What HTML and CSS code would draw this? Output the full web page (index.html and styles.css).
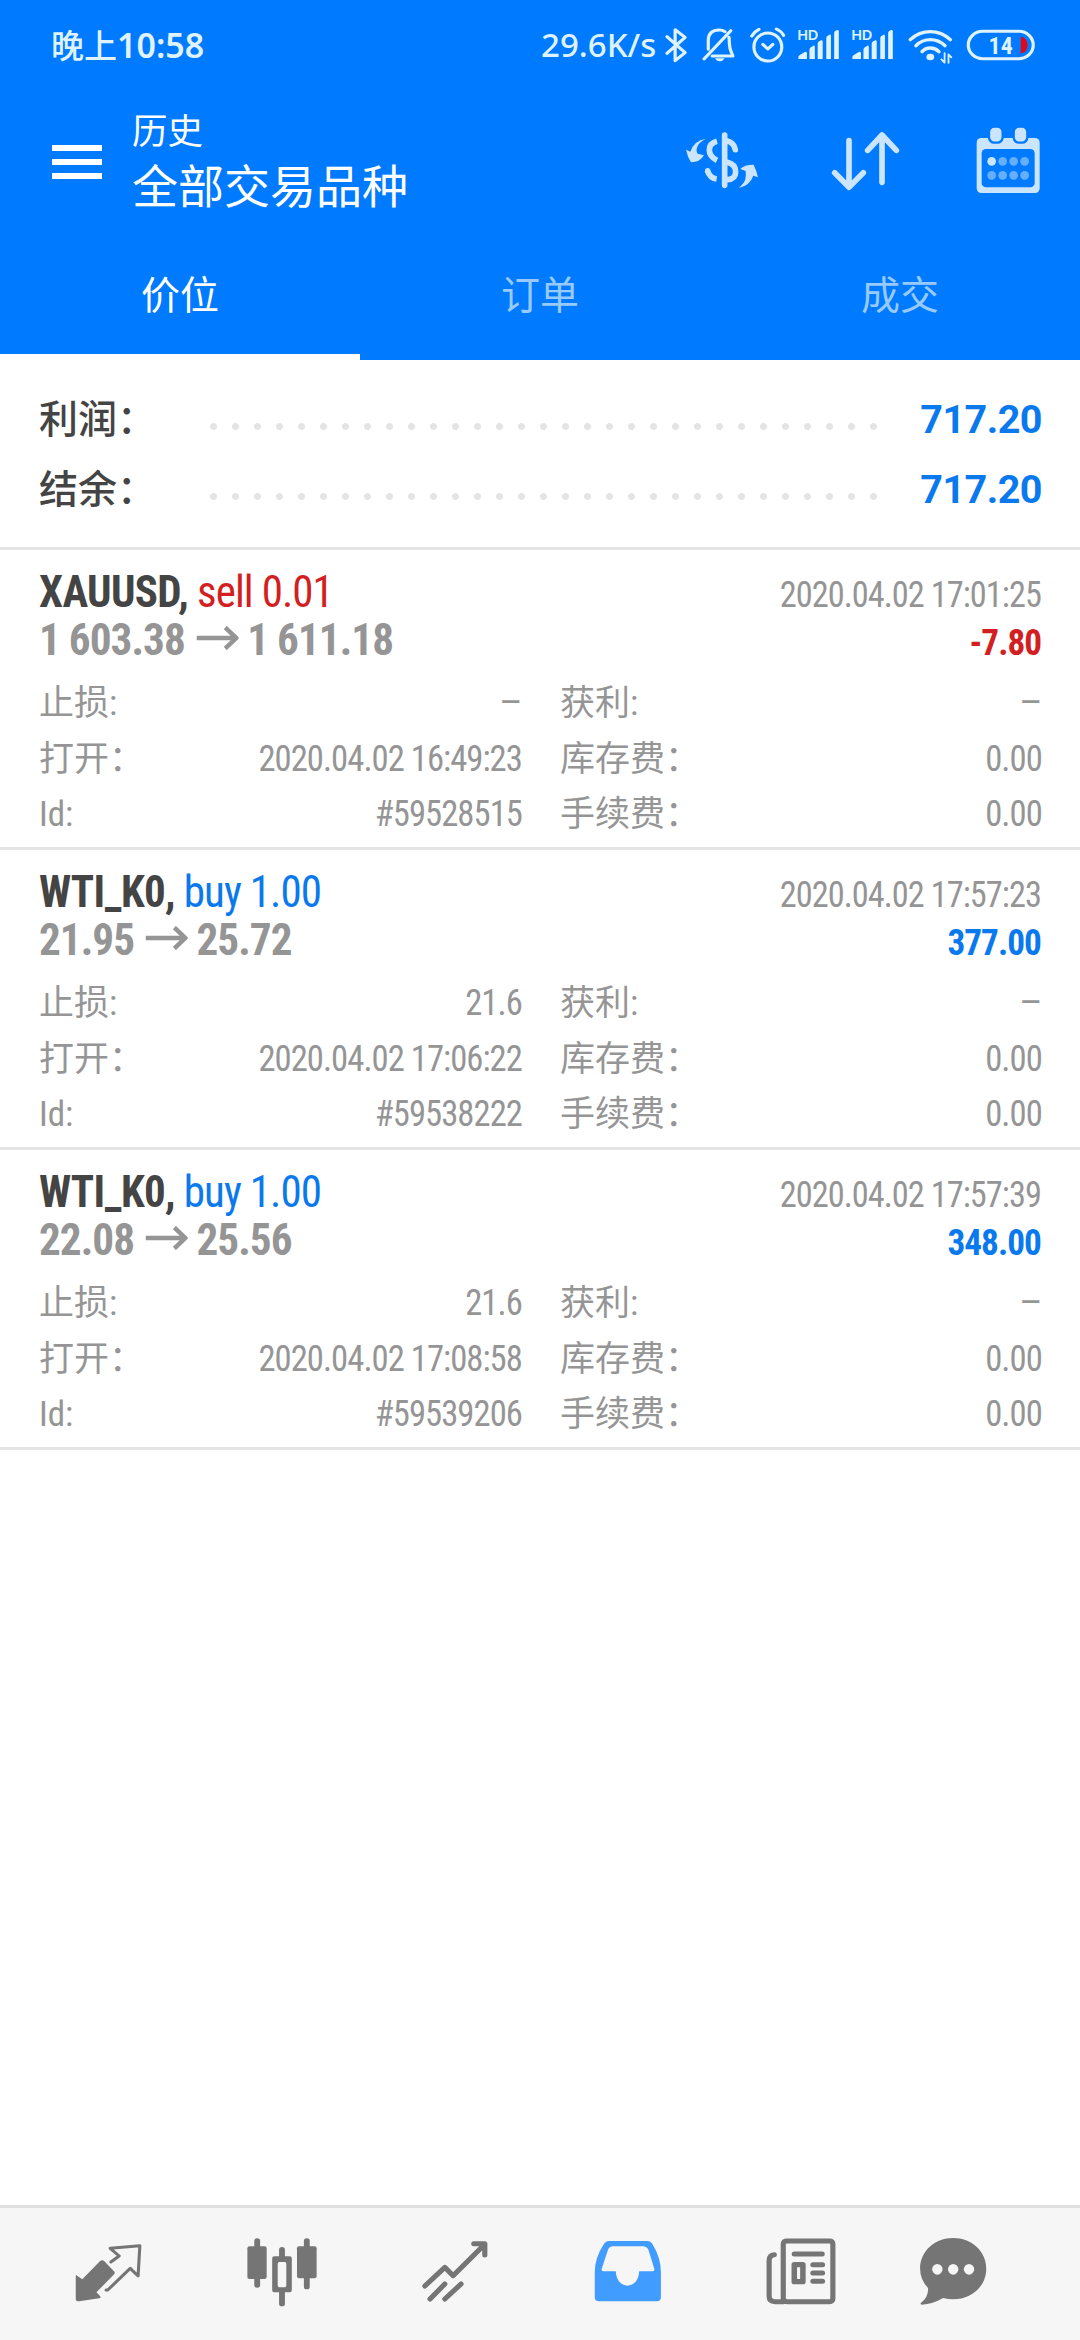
FILE: index.html
```html
<!DOCTYPE html>
<html lang="zh-CN">
<head>
<meta charset="utf-8">
<title>历史</title>
<link rel="stylesheet" href="styles.css">
</head>
<body>
<header class="header">
  <div class="status">
    <span class="clock">晚上<b>10:58</b></span>
    <div class="status-right">
      <span class="speed">29.6K/s</span>
      <svg class="s-bt" viewBox="400 75 100 120" preserveAspectRatio="none"><path d="M411 110L462 158L434 182V89L462 112L411 160" class="st"/></svg>
      <svg class="s-bell" viewBox="500 75 130 120" preserveAspectRatio="none"><path d="M514 177L589 92M526 148V122C526 98 540 90 557 90Q566 90 573 95M584 112Q585 118 585 130C585 148 590 156 595 168H537" class="st"/><path d="M545 175H572Q567 184 558 184T545 175Z" fill="#dff2ff"/></svg>
      <svg class="s-alarm" viewBox="630 75 135 120" preserveAspectRatio="none"><ellipse cx="694" cy="141" rx="39" ry="42" class="st"/><path d="M680 133L694 147L708 133M649 108Q656 95 669 88M738 106Q731 93 718 87" class="st"/></svg>
      <svg class="s-sig" viewBox="765 75 150 120" preserveAspectRatio="none"><text x="776" y="119" class="hd">HD</text><path d="M780 177V171Q780 168 784 165L798 156Q804 153 804 160V177ZM811 177V149Q811 145 815 142L822 137Q826 136 826 141V177ZM834 177V131Q834 127 838 124L844 121Q848 120 848 125V177ZM858 177V114Q858 110 862 107L867 104Q871 103 871 108V177ZM880 177V99Q880 95 884 92L889 90Q893 90 893 94V177Z" fill="#dff2ff"/></svg>
      <svg class="s-sig" viewBox="765 75 150 120" preserveAspectRatio="none"><text x="776" y="119" class="hd">HD</text><path d="M780 177V171Q780 168 784 165L798 156Q804 153 804 160V177ZM811 177V149Q811 145 815 142L822 137Q826 136 826 141V177ZM834 177V131Q834 127 838 124L844 121Q848 120 848 125V177ZM858 177V114Q858 110 862 107L867 104Q871 103 871 108V177ZM880 177V99Q880 95 884 92L889 90Q893 90 893 94V177Z" fill="#dff2ff"/></svg>
      <svg class="s-wifi" viewBox="1066 75 164 120" preserveAspectRatio="none"><path d="M1092 119Q1116 95 1148 95T1204 119M1108 137Q1125 119 1148 119T1189 137M1125 155Q1134 144 1148 144T1172 155" class="st wave"/><ellipse cx="1148" cy="171" rx="11" ry="10" fill="#dff2ff"/><path d="M1188 159V188L1179 178M1199 189V163L1207 172" class="st thin"/></svg>
      <svg class="s-batt" viewBox="1230 75 230 120" preserveAspectRatio="none"><rect x="1256" y="94" width="182" height="82" rx="40" ry="41" class="st"/><path d="M1403 110Q1422 114 1422 135T1403 161Z" fill="#e00818"/><text x="1313" y="162" textLength="68" lengthAdjust="spacingAndGlyphs" class="pct">14</text></svg>
    </div>
  </div>
  <div class="bar">
    <div class="burger"><i></i><i></i><i></i></div>
    <div class="titles"><div class="sub">历史</div><h1>全部交易品种</h1></div>
    <div class="actions">
      <svg class="a-money" viewBox="60 75 250 210"><g fill="none" stroke="#cce5ff" stroke-width="17"><path d="M194 105V256M202 123Q222 128 226 149M202 187Q227 193 227 215T202 239" stroke-linecap="round"/><path d="M171 124Q148 130 148 150T171 181M142 211Q149 234 170 237"/></g><circle cx="143" cy="212" r="8" fill="#cce5ff"/><path d="M137 117Q117 127 112 140T113 161L132 166Q120 187 93 187Q83 172 78 149L91 155Q103 121 137 117ZM236 264Q253 250 256 238T257 213L241 207Q252 194 281 194Q290 212 294 232L280 227Q270 257 236 264Z" fill="#cce5ff"/></svg>
      <svg class="a-sort" viewBox="500 75 230 210"><path d="M566 122V261M523 218L566 262L609 218M665 247V105M622 151L665 105L708 151" fill="none" stroke="#cce5ff" stroke-width="17" stroke-linecap="round" stroke-linejoin="round"/></svg>
      <svg class="a-cal" viewBox="940 75 210 210"><rect x="951" y="114" width="189" height="165" rx="14" fill="#cce5ff"/><rect x="966" y="147" width="159" height="115" rx="13" fill="#007aff"/><g fill="#cce5ff" stroke="#007aff" stroke-width="7"><rect x="988" y="80" width="41" height="48" rx="16"/><rect x="1062" y="80" width="41" height="48" rx="16"/></g><g fill="#66afff"><circle cx="996" cy="184" r="13" fill="#cce5ff"/><circle cx="1029" cy="184" r="13"/><circle cx="1062" cy="184" r="13"/><circle cx="1095" cy="184" r="13"/><circle cx="996" cy="226" r="13"/><circle cx="1029" cy="226" r="13"/><circle cx="1062" cy="226" r="13"/><circle cx="1095" cy="226" r="13"/></g></svg>
    </div>
  </div>
  <nav class="tabs"><div class="tab active">价位</div><div class="tab">订单</div><div class="tab">成交</div></nav>
</header>

<section class="summary">
  <div class="sum-row"><span class="sum-label">利润：</span><span class="dots"></span><span class="sum-value">717.20</span></div>
  <div class="sum-row"><span class="sum-label">结余：</span><span class="dots"></span><span class="sum-value">717.20</span></div>
</section>

<main>
  <article class="deal">
    <div class="line"><div class="name"><b>XAUUSD,</b> <span class="sell">sell 0.01</span></div><div class="time">2020.04.02 17:01:25</div></div>
    <div class="line"><div class="price">1 603.38<svg class="arrow" viewBox="0 0 44 24"><path d="M0 12H42M30 1.5L41.5 12L30 22.5"/></svg>1 611.18</div><div class="pnl sell">-7.80</div></div>
    <div class="details">
      <div><span>止损:</span><span class="dash">–</span></div><div><span>获利:</span><span class="dash">–</span></div>
      <div><span>打开：</span><span>2020.04.02 16:49:23</span></div><div><span>库存费：</span><span>0.00</span></div>
      <div><span>Id:</span><span>#59528515</span></div><div><span>手续费：</span><span>0.00</span></div>
    </div>
  </article>
  <article class="deal">
    <div class="line"><div class="name"><b>WTI_K0,</b> <span class="buy">buy 1.00</span></div><div class="time">2020.04.02 17:57:23</div></div>
    <div class="line"><div class="price">21.95<svg class="arrow" viewBox="0 0 44 24"><path d="M0 12H42M30 1.5L41.5 12L30 22.5"/></svg>25.72</div><div class="pnl buy">377.00</div></div>
    <div class="details">
      <div><span>止损:</span><span>21.6</span></div><div><span>获利:</span><span class="dash">–</span></div>
      <div><span>打开：</span><span>2020.04.02 17:06:22</span></div><div><span>库存费：</span><span>0.00</span></div>
      <div><span>Id:</span><span>#59538222</span></div><div><span>手续费：</span><span>0.00</span></div>
    </div>
  </article>
  <article class="deal">
    <div class="line"><div class="name"><b>WTI_K0,</b> <span class="buy">buy 1.00</span></div><div class="time">2020.04.02 17:57:39</div></div>
    <div class="line"><div class="price">22.08<svg class="arrow" viewBox="0 0 44 24"><path d="M0 12H42M30 1.5L41.5 12L30 22.5"/></svg>25.56</div><div class="pnl buy">348.00</div></div>
    <div class="details">
      <div><span>止损:</span><span>21.6</span></div><div><span>获利:</span><span class="dash">–</span></div>
      <div><span>打开：</span><span>2020.04.02 17:08:58</span></div><div><span>库存费：</span><span>0.00</span></div>
      <div><span>Id:</span><span>#59539206</span></div><div><span>手续费：</span><span>0.00</span></div>
    </div>
  </article>
</main>

<footer class="nav">
  <svg viewBox="212 140 209 210" preserveAspectRatio="none"><path d="M220 257Q220 252 224 256L239 267L290 213Q297 207 303 213L331 243Q336 248 330 253L280 306L291 318Q294 323 288 324L230 333Q220 334 220 325Z" fill="#757575"/><path d="M322 215L346 197L320 174L406 166L401 257L378 234L313 299H308" class="g" stroke-width="9"/></svg>
  <svg viewBox="712 140 209 210" preserveAspectRatio="none"><g fill="#757575"><rect x="716" y="168" width="56" height="98" rx="6"/><rect x="860" y="168" width="57" height="96" rx="6"/><path fill-rule="evenodd" d="M794 198H839Q845 198 845 204V300Q845 306 839 306H794Q788 306 788 300V204Q788 198 794 198ZM809 215Q804 215 804 221V285Q804 291 809 291H824Q829 291 829 285V221Q829 215 824 215Z"/><rect x="736" y="144" width="17" height="148" rx="8"/><rect x="880" y="144" width="17" height="153" rx="8"/><path d="M808 207V178Q808 170 816.500 170T825 178V207ZM808 298V340Q808 348 816.500 348T825 340V298Z"/></g></svg>
  <svg viewBox="1214 140 209 210" preserveAspectRatio="none"><path d="M1231 287L1289 231L1313 256L1405 162M1373 160H1405V194M1246 326L1289 281M1289 326L1336 281" class="g" stroke-width="15"/></svg>
  <svg viewBox="150 140 209 210" preserveAspectRatio="none"><path fill-rule="evenodd" d="M198 152H312Q320 152 325 160Q350 202 350 245V320Q350 333 338 333H170Q158 333 158 320V245Q158 202 185 160Q190 152 198 152ZM211 168Q201 168 197 177L178 236Q177 243 183 243H219C220 269 234 286 253 286S286 269 287 243H326Q332 243 331 236L314 179Q309 168 298 168Z" fill="#419cff"/></svg>
  <svg viewBox="653 140 209 210" preserveAspectRatio="none"><g class="g"><path d="M717 152H840Q850 152 850 162V324Q850 334 840 334H717Q706 334 706 324V162Q706 152 717 152ZM706 334H682Q665 334 665 318V210Q665 195 680 193" stroke-width="15"/><path d="M738 191H819M792 223H820M792 248H820M792 273H820" stroke-width="15"/><rect x="738" y="223" width="25" height="51" stroke-width="16"/></g></svg>
  <svg viewBox="1094 140 209 210" preserveAspectRatio="none"><path d="M1199 143C1252 143 1295 182 1295 235S1252 327 1199 327Q1184 327 1170 323Q1138 342 1108 343Q1102 342 1106 337Q1128 319 1126 293Q1103 267 1103 235C1103 182 1146 143 1199 143Z" fill="#757575"/><g fill="#f6f6f6"><ellipse cx="1153" cy="237" rx="15" ry="16"/><ellipse cx="1199" cy="237" rx="15" ry="16"/><ellipse cx="1245" cy="237" rx="15" ry="16"/></g></svg>
</footer>
</body>
</html>
```
FILE: styles.css
```css
* { box-sizing: border-box; }
body {
  margin: 0;
  width: 1080px;
  height: 2340px;
  display: flex;
  flex-direction: column;
  background: #fff;
  font-family: "Roboto Condensed", Roboto, "Noto Sans CJK SC", sans-serif;
  font-stretch: 75%;
  color: #444;
}
svg { display: block; flex: none; }

.header {
  height: 360px;
  background: #007aff;
  color: #fff;
  display: flex;
  flex-direction: column;
  font-family: "Noto Sans CJK SC", sans-serif;
  font-stretch: normal;
}
.status {
  height: 90px;
  padding: 0 38.6px 0 51px;
  display: flex;
  align-items: center;
  justify-content: space-between;
  color: #dff2ff;
  font-family: "Noto Sans", "Noto Sans CJK SC", sans-serif;
  font-weight: 500;
  font-size: 33px;
  line-height: 40px;
}
.clock b { font-size: 34px; font-weight: 600; }
.status-right { display: flex; align-items: center; }
.speed { width: 122px; }
.status-right svg { height: 40px; }
.s-bt { width: 35.7px; }
.s-bell { width: 46.4px; }
.s-alarm { width: 48.2px; }
.s-sig { width: 53.7px; }
.s-wifi { width: 58.6px; }
.s-batt { width: 82.1px; }
.st {
  fill: none;
  stroke: #dff2ff;
  stroke-width: 9;
  stroke-linecap: round;
  stroke-linejoin: round;
}
.wave { stroke-width: 10; }
.thin { stroke-width: 5; }
.hd { font: 600 42px "Noto Sans", sans-serif; letter-spacing: -2px; fill: #dff2ff; }
.pct { font: 700 72px Roboto, sans-serif; font-stretch: 75%; fill: #dff2ff; }

.bar { height: 140px; display: flex; padding: 0 36.7px 0 52px; }
.burger { width: 50px; padding-top: 55px; display: flex; flex-direction: column; gap: 8px; }
.burger i { height: 6px; background: #fff; }
.titles { margin-left: 30px; padding-top: 17px; }
.sub { font-size: 35.5px; line-height: 44px; }
h1 { margin: 0; font-size: 46px; line-height: 65px; font-weight: 400; }
.actions { margin-left: auto; padding-top: 35px; display: flex; }
.actions svg { height: 70px; }
.a-money { width: 83.3px; margin-right: 63.4px; }
.a-sort { width: 76.7px; margin-right: 70px; }
.a-cal { width: 70px; }

.tabs { flex: 1; display: flex; }
.tab {
  flex: 1;
  text-align: center;
  font-size: 39px;
  line-height: 60px;
  padding-top: 32px;
  color: #99caff;
  border-bottom: 6px solid transparent;
}
.tab.active { color: #fff; border-bottom-color: #fff; }

.summary { height: 190px; padding: 23px 38px 0 39px; border-bottom: 3px solid #e4e4e4; }
.sum-row { height: 70px; display: flex; align-items: center; }
.sum-label {
  width: 171px;
  font: 500 39px/66px "Noto Sans CJK SC", sans-serif;
  margin-bottom: 4px;
}
.dots {
  width: 667px;
  height: 7px;
  margin-top: 17px;
  background: radial-gradient(circle at 3.5px 3.5px, #e4e4e4 3.1px, transparent 3.8px) 0 0 / 22px 7px repeat-x;
}
.sum-value {
  margin: 3px 0 0 auto;
  font: 700 39.5px/67px Roboto, sans-serif;
  letter-spacing: -0.5px;
  color: #0a79ee;
}

.deal { height: 300px; padding: 18px 39px 0; border-bottom: 3px solid #e4e4e4; }
.line { height: 48px; line-height: 48px; display: flex; justify-content: space-between; align-items: baseline; }
.name { font-size: 45px; letter-spacing: -1px; transform: scaleX(.955); transform-origin: left; }
.name b { font-weight: 700; letter-spacing: -0.7px; }
.price { font-size: 45px; font-weight: 700; letter-spacing: -1px; transform: scaleX(.96); transform-origin: left; color: #959596; }
.arrow { display: inline-block; width: 44px; height: 24px; margin: 0 9px 5px 12px; }
.arrow path { fill: none; stroke: #959596; stroke-width: 4.5; }
.time { font-size: 36.5px; letter-spacing: -1px; transform: scaleX(.94); transform-origin: right; color: #959596; }
.pnl { font-size: 36.5px; font-weight: 700; letter-spacing: -1px; transform: scaleX(.965); transform-origin: right; }
.sell { color: #d31f22; }
.buy { color: #0a79ee; }
.details {
  margin-top: 12px;
  display: grid;
  grid-template-columns: 483px 482px;
  column-gap: 38px;
  font-size: 36px;
  line-height: 55.5px;
  color: #959596;
}
.details > div { height: 55.5px; display: flex; justify-content: space-between; }
.details span:first-child { font-size: 35px; }
.details span:last-child { letter-spacing: -1px; transform: scaleX(.962); transform-origin: right; }
.details .dash:last-child { transform: scaleX(1.15); }

.nav {
  margin-top: auto;
  height: 135px;
  background: #f6f6f6;
  border-top: 3px solid #e0e0e0;
  display: flex;
  padding: 29px 0 0 73px;
  gap: 101px;
}
.nav svg { width: 72px; height: 70px; }
.nav svg:last-child { margin-left: -21px; }
.g { fill: none; stroke: #757575; stroke-linecap: round; stroke-linejoin: round; }
```
